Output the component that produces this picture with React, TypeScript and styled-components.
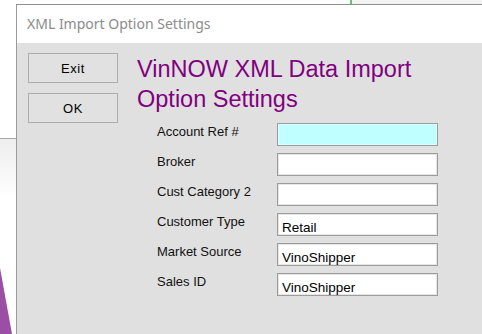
import styled, { createGlobalStyle } from 'styled-components';

const GlobalStyle = createGlobalStyle`
    html, body {
        margin: 0;
        padding: 0;
        background: #ffffff;
    }
    body {
        width: 482px;
        height: 334px;
        overflow: hidden;
    }
`;

const fields = [
    { label: 'Account Ref #', value: '', highlight: true },
    { label: 'Broker', value: '' },
    { label: 'Cust Category 2', value: '' },
    { label: 'Customer Type', value: 'Retail' },
    { label: 'Market Source', value: 'VinoShipper' },
    { label: 'Sales ID', value: 'VinoShipper' }
];

export default function App() {
    return (
        <>
            <GlobalStyle />
            <Desktop>
                <BackStrip />
                <GreenEdge />
                <ShelfLine />
                <ShelfFade />
                <PurpleWedge />
                <DialogWindow>
                    <TitleBar>XML Import Option Settings</TitleBar>
                    <Body>
                        <ButtonColumn>
                            <DlgButton type="button">Exit</DlgButton>
                            <DlgButton type="button">OK</DlgButton>
                        </ButtonColumn>
                        <Content>
                            <Heading>
                                VinNOW XML Data Import
                                <br />
                                Option Settings
                            </Heading>
                            <Form>
                                {fields.map((f) => (
                                    <Row key={f.label}>
                                        <Label>{f.label}</Label>
                                        <Field $highlight={!!f.highlight} defaultValue={f.value} readOnly />
                                    </Row>
                                ))}
                            </Form>
                        </Content>
                    </Body>
                </DialogWindow>
            </Desktop>
        </>
    );
}

const Desktop = styled.div`
    position: relative;
    width: 482px;
    height: 334px;
    overflow: hidden;
    background: #ffffff;
`;

const BackStrip = styled.div`
    position: absolute;
    left: 352px;
    top: 0;
    width: 130px;
    height: 4px;
    background: #f3f3f3;
`;

const GreenEdge = styled.div`
    position: absolute;
    left: 350px;
    top: 0;
    width: 2px;
    height: 4px;
    background: #67c567;
`;

const ShelfLine = styled.div`
    position: absolute;
    left: 0;
    top: 138px;
    width: 16px;
    height: 1px;
    background: #a8a8a8;
`;

const ShelfFade = styled.div`
    position: absolute;
    left: 0;
    top: 139px;
    width: 16px;
    height: 60px;
    background: linear-gradient(180deg, #eeeeee 0%, #ffffff 100%);
`;

const PurpleWedge = styled.div`
    position: absolute;
    left: 0;
    top: 268px;
    width: 12px;
    height: 66px;
    background: #9a4fa4;
    clip-path: polygon(0 0, 100% 100%, 0 100%);
`;

const DialogWindow = styled.div`
    position: absolute;
    left: 16px;
    top: 4px;
    right: -20px;
    bottom: -20px;
    border-left: 1px solid #9a9a9a;
    border-top: 1px solid #8f8f8f;
    display: flex;
    flex-direction: column;
    background: #e0e0e0;
`;

const TitleBar = styled.div`
    height: 38px;
    flex: none;
    background: #ffffff;
    display: flex;
    align-items: center;
    padding: 0 0 2px 10px;
    box-sizing: border-box;
    font-family: 'Noto Sans', 'Open Sans', sans-serif;
    font-size: 14px;
    color: #8c8c8c;
`;

const Body = styled.div`
    flex: 1;
    display: flex;
    padding: 10px 0 0 11px;
`;

const ButtonColumn = styled.div`
    display: flex;
    flex-direction: column;
    gap: 10px;
    width: 90px;
`;

const DlgButton = styled.button`
    width: 90px;
    height: 30px;
    box-sizing: border-box;
    border: 1px solid #adadad;
    background: #e1e1e1;
    font-family: 'Liberation Sans', Arial, sans-serif;
    font-size: 13px;
    letter-spacing: 0.6px;
    color: #000000;
    padding: 1px 0 0;
    cursor: pointer;
`;

const Content = styled.div`
    margin-left: 19px;
    display: flex;
    flex-direction: column;
`;

const Heading = styled.h1`
    margin: 1px 0 0;
    font-family: 'Liberation Sans', Arial, sans-serif;
    font-weight: normal;
    font-size: 23.5px;
    line-height: 30px;
    color: #800080;
`;

const Form = styled.div`
    margin: 9px 0 0 20px;
    display: flex;
    flex-direction: column;
    gap: 7px;
`;

const Row = styled.div`
    display: grid;
    grid-template-columns: 120px 161px;
    align-items: start;
    height: 23px;
`;

const Label = styled.span`
    font-family: 'Liberation Sans', Arial, sans-serif;
    font-size: 13px;
    line-height: 16px;
    padding-top: 1px;
    color: #111111;
`;

const Field = styled.input<{ $highlight: boolean }>`
    width: 161px;
    height: 23px;
    box-sizing: border-box;
    border: 1px solid #9c9c9c;
    box-shadow: inset 0 0 0 1px ${(p) => (p.$highlight ? '#d8ffff' : '#e6e6e6')};
    background: ${(p) => (p.$highlight ? '#c0ffff' : '#ffffff')};
    padding: 5px 0 0 4px;
    font-family: 'Liberation Sans', Arial, sans-serif;
    font-size: 13.5px;
    color: #000000;
    outline: none;
`;
